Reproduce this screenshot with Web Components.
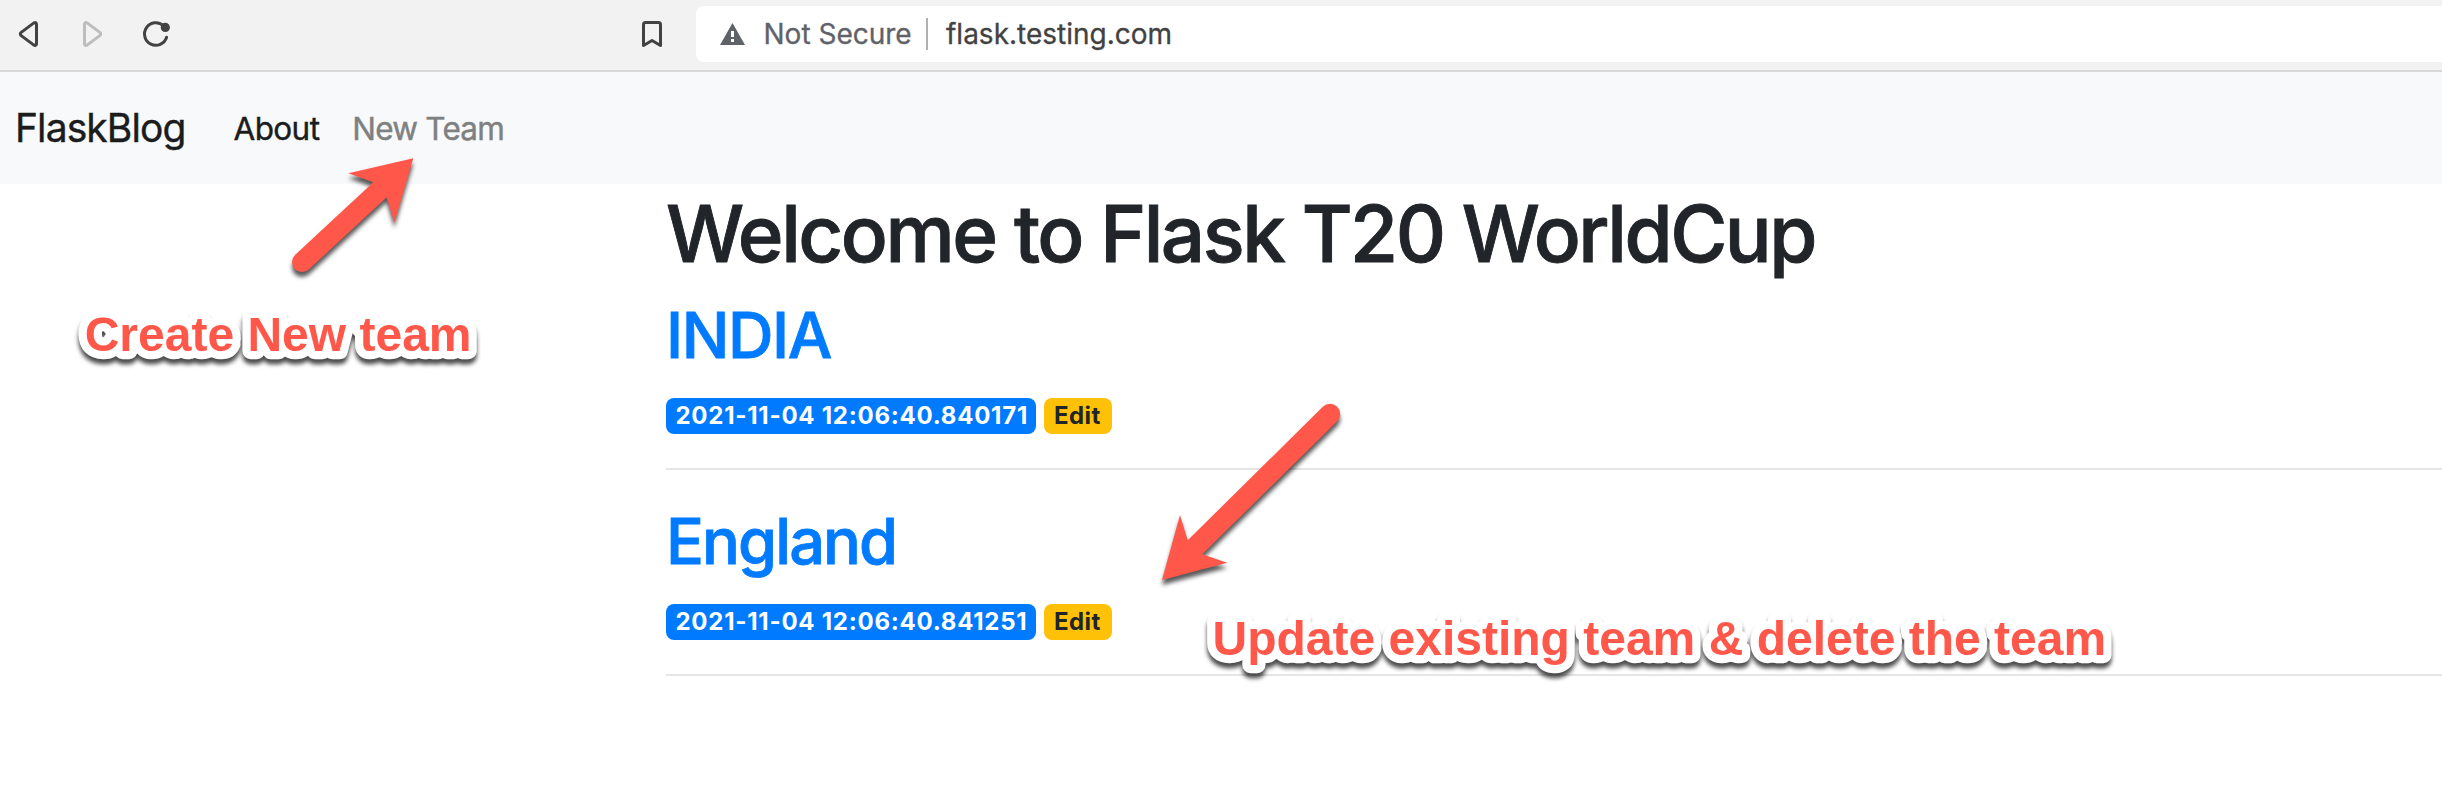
<!DOCTYPE html>
<html lang="en">
<head>
<meta charset="utf-8">
<title>Flask T20 WorldCup</title>
<style>
  html, body { margin: 0; height: 100%; background: #fff; overflow: hidden; }
  body { position: relative; font-family: Inter, "Liberation Sans", sans-serif; }
</style>
</head>
<body>
<browser-toolbar>
  <span slot="status">Not Secure</span>
  <span slot="url">flask.testing.com</span>
</browser-toolbar>
<site-nav>
  <span slot="brand">FlaskBlog</span>
  <nav-link active>About</nav-link>
  <nav-link>New Team</nav-link>
</site-nav>
<team-list>
  <span slot="heading">Welcome to Flask T20 WorldCup</span>
  <team-post created="2021-11-04 12:06:40.840171" tracking="-1.4px">INDIA</team-post>
  <team-post created="2021-11-04 12:06:40.841251" tracking="-1.9px">England</team-post>
</team-list>
<callout-arrow style="left:0;top:0"
  d="M413.3 158.3L348.3 173.3L373.3 182.3L295.2 254.7A10 10 0 0 0 309 269.3L386.7 197.3L394.3 222.7Z"></callout-arrow>
<callout-arrow style="left:0;top:0"
  d="M1162 580L1180 515L1187.7 540.3L1322.8 406.8A10 10 0 0 1 1337.2 421.2L1202.3 554.3L1227.3 562.7Z"></callout-arrow>
<callout-label style="left:64px;top:300px" label="Create New team" start="20.7" width="440"></callout-label>
<callout-label style="left:1192px;top:604px" label="Update existing team &amp; delete the team" start="20.5" width="940"></callout-label>

<script>
const define = (name, html, setup) => {
  customElements.define(name, class extends HTMLElement {
    connectedCallback() {
      if (this.shadowRoot) return;
      const root = this.attachShadow({ mode: 'open' });
      const t = document.createElement('template');
      t.innerHTML = html;
      root.append(t.content.cloneNode(true));
      if (setup) setup(this, root);
    }
  });
};

define('browser-toolbar', `
  <style>
    :host { display: flex; box-sizing: border-box; height: 72px; padding: 6px 0 8px 16px;
      background: #f2f2f2; border-bottom: 2px solid #d6d7d9; align-items: center; }
    svg { display: block; flex: none; fill: none; stroke: #424242; stroke-width: 3; stroke-linejoin: round; stroke-linecap: round; }
    .nav { display: flex; gap: 36px; flex: 0 0 623px; }
    .mark { flex: 0 0 57px; }
    .field { flex: 1; height: 56px; display: flex; align-items: center; background: #fff;
      border-radius: 8px 0 0 8px; padding-left: 22px; font-size: 28px; line-height: 34px; white-space: nowrap;
      -webkit-text-stroke: .3px currentColor; }
    .status { color: #5f6368; margin-left: 16.5px; width: 162.5px; -webkit-text-stroke: .3px #5f6368; }
    .rule { width: 2px; height: 32px; background: #b1b1b1; }
    .url { color: #424242; margin-left: 18px; -webkit-text-stroke: .3px #424242; }
  </style>
  <div class="nav">
    <svg width="28" height="32" viewBox="0 0 28 32"><path d="M5.2 14.4L17.6 5.1Q20.3 3.6 20.5 6V26Q20.3 28.4 17.6 26.9L5.2 17.6Q3.4 16 5.2 14.4Z"/></svg>
    <svg width="28" height="32" viewBox="0 0 28 32" style="stroke:#bdbdbd"><path d="M19.8 14.4L7.4 5.1Q4.7 3.6 4.5 6V26Q4.7 28.4 7.4 26.9L19.8 17.6Q21.6 16 19.8 14.4Z"/></svg>
    <svg width="32" height="32" viewBox="0 0 32 32" style="overflow:visible"><path d="M22.6 19.3A11.3 11.3 0 1 1 19.6 7.8"/><circle cx="21.3" cy="9.4" r="4.6" fill="#424242" stroke="none"/></svg>
  </div>
  <svg class="mark" width="57" height="32" viewBox="0 0 57 32"><path d="M4.500 27.500V6.500Q4.500 4.500 6.500 4.500H19.500Q21.500 4.500 21.500 6.500V27.500L13 22.500Z"/></svg>
  <div class="field">
    <svg width="29" height="28" viewBox="0 0 29 28"><path d="M14.500 3L27 25H2Z" fill="#5f6368" stroke="none"/><path d="M13 11h3v6h-3zM13 19h3v3h-3z" fill="#fff" stroke="none"/></svg>
    <div class="status"><slot name="status"></slot></div>
    <div class="rule"></div>
    <div class="url"><slot name="url"></slot></div>
  </div>`);

define('site-nav', `
  <style>
    :host { display: flex; box-sizing: border-box; height: 112px; padding: 0 0 0 15px; align-items: baseline;
      background: #f8f9fb; }
    .brand { font-size: 39px; line-height: 112px; letter-spacing: -.9px; color: #1b1c1c; width: 218.5px;
      -webkit-text-stroke: .4px #1b1c1c; }
    .links { display: flex; gap: 33px; }
  </style>
  <div class="brand"><slot name="brand"></slot></div>
  <div class="links"><slot></slot></div>`);

define('nav-link', `
  <style>
    :host { display: block; font-size: 31.5px; line-height: 40px; letter-spacing: -.8px; color: #7f8080;
      -webkit-text-stroke: .4px #7f8080; position: relative; top: -2px; }
    :host([active]) { color: #1b1c1c; letter-spacing: -.6px; -webkit-text-stroke-color: #1b1c1c; }
  </style><slot></slot>`);

define('team-list', `
  <style>
    :host { display: block; padding-left: 666px; }
    h1 { margin: 0; box-sizing: border-box; height: 112px; padding-top: 2px; font-size: 78px; font-weight: 500;
      line-height: 96px; letter-spacing: -2.48px; color: #212529; white-space: nowrap; -webkit-text-stroke: .9px #212529; }
  </style>
  <h1><slot name="heading"></slot></h1>
  <slot></slot>`);

define('team-post', `
  <style>
    :host { display: block; margin-bottom: 32px; }
    h2 { margin: 0; box-sizing: border-box; height: 93px; padding-top: 1px; font-size: 63px; font-weight: 500;
      line-height: 76px; color: #007bff; -webkit-text-stroke: .8px #007bff; }
    .meta { display: flex; gap: 8px; padding-top: 9px; }
    hr { margin: 34px 0 0; border: 0; height: 2px; background: #e5e5e5; }
  </style>
  <h2><slot></slot></h2>
  <div class="meta"><tag-badge class="date"></tag-badge><tag-badge tone="warning">Edit</tag-badge></div>
  <hr>`,
  (el, root) => {
    root.querySelector('.date').textContent = el.getAttribute('created');
    root.querySelector('h2').style.letterSpacing = el.getAttribute('tracking');
  });

define('tag-badge', `
  <style>
    :host { display: block; box-sizing: border-box; width: 370px; height: 36px; padding-left: 9.500px; border-radius: 8px;
      background: #007bff; color: #fff; font-size: 24px; font-weight: 700; line-height: 35px; letter-spacing: .75px; white-space: nowrap; }
    :host([tone=warning]) { width: 68px; padding-left: 10px; background: #ffc107; color: #212529; letter-spacing: .4px; }
  </style><slot></slot>`);

define('callout-arrow', `
  <style>
    :host { display: block; position: absolute; pointer-events: none; }
    svg { display: block; filter: drop-shadow(0 5px 2px rgba(0,0,0,.65)); }
  </style>
  <svg width="2442" height="808"><path fill="#ff584a"/></svg>`,
  (el, root) => root.querySelector('path').setAttribute('d', el.getAttribute('d')));

define('callout-label', `
  <style>
    :host { display: block; position: absolute; pointer-events: none; }
    svg { display: block; filter: drop-shadow(0 5px 2px rgba(0,0,0,.7)); }
    text { font: 700 48px "Liberation Sans", Arial, sans-serif; stroke-linejoin: round; fill: #ff584a;
      stroke: #fff; stroke-width: 16.5px; paint-order: stroke fill; }
  </style>
  <svg height="84"><text y="51"></text></svg>`,
  (el, root) => {
    const text = root.querySelector('text');
    root.querySelector('svg').setAttribute('width', el.getAttribute('width'));
    text.setAttribute('x', el.getAttribute('start'));
    text.textContent = el.getAttribute('label');
  });
</script>
</body>
</html>
